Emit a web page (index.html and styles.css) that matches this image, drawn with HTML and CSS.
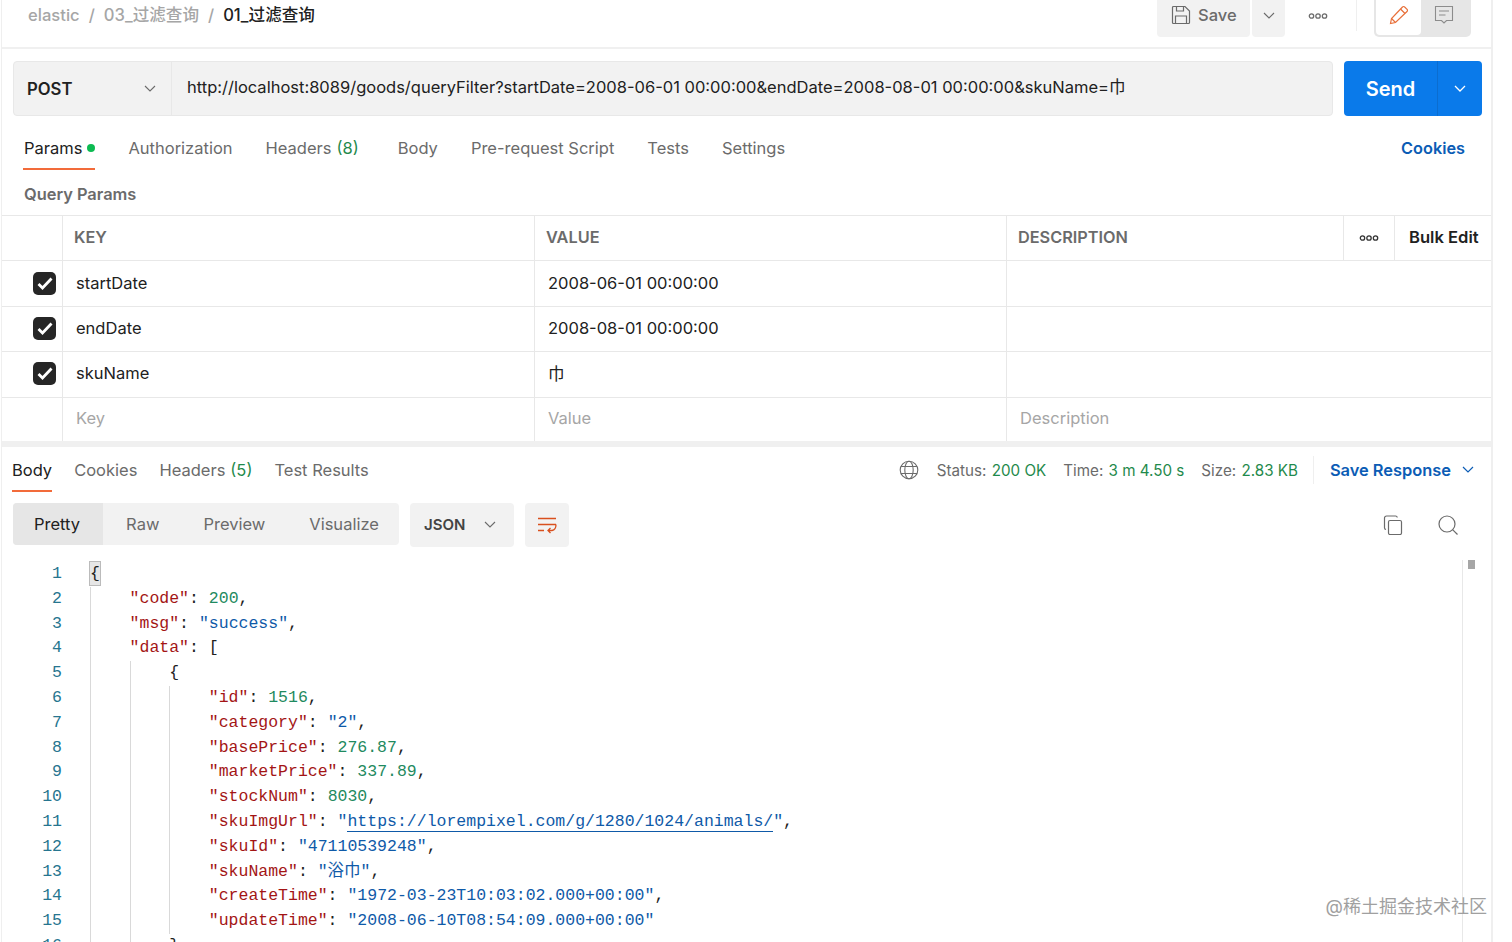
FILE: index.html
```html
<html>

<head>
	<meta charset="utf-8">
	<title>01_过滤查询</title>
	<link rel="stylesheet" href="styles.css">
</head>

<body>
	<div id="app">
		<div class="topBar">
			<div class="crumbs">
				<span class="crumb">elastic</span><span class="crumbSep">/</span>
				<span class="crumb">03_过滤查询</span><span class="crumbSep">/</span>
				<span class="crumbNow">01_过滤查询</span>
			</div>
			<div class="topActions">
				<div class="saveBtn">
					<svg class="icon20" viewBox="0 0 20 20" fill="none" stroke="#6b6b6b" stroke-width="1.2"><path d="M1.5 2.5a1 1 0 0 1 1-1h11.5l4.500 4.500v11.500a1 1 0 0 1-1 1h-15a1 1 0 0 1-1-1z"/><path d="M5.500 1.500v4.500h7v-4.500M4.500 18.500v-7.500h11v7.500"/></svg>
					<span>Save</span>
				</div>
				<div class="saveArrow">
					<svg class="chev" viewBox="0 0 12 7" fill="none" stroke="#6b6b6b" stroke-width="1.100"><path d="M1 1l5 5 5-5"/></svg>
				</div>
				<div class="dots">
					<svg class="dotsIcon" viewBox="0 0 20 6" fill="none" stroke="#6b6b6b" stroke-width="1.300"><circle cx="3.500" cy="3" r="2.200"/><circle cx="10" cy="3" r="2.200"/><circle cx="16.500" cy="3" r="2.200"/></svg>
				</div>
				<div class="toggleGroup">
					<div class="toggleOn">
						<svg class="icon20" viewBox="0 0 20 20" fill="none" stroke="#e8703a" stroke-width="1.200"><path d="M1.500 18.500l1-5L13.500 2a1.500 1.500 0 0 1 2.200 0l2.300 2.300a1.500 1.500 0 0 1 0 2.200L6.500 17.500z"/><path d="M11.500 4l4.500 4.500M2.500 13.500l4 4"/></svg>
					</div>
					<div class="toggleOff">
						<svg class="icon20" viewBox="0 0 20 20" fill="none" stroke="#8c8c8c" stroke-width="1.100"><path d="M1.500 1.500h17v14h-6l-2.500 2.500-2.500-2.500h-6z"/><path d="M5 6h10M5 10h6.500"/></svg>
					</div>
				</div>
			</div>
		</div>

		<div class="urlRow">
			<div class="urlBox">
				<div class="method">
					<span>POST</span>
					<svg class="chev" viewBox="0 0 12 7" fill="none" stroke="#6b6b6b" stroke-width="1.100"><path d="M1 1l5 5 5-5"/></svg>
				</div>
				<div class="urlText">http://localhost:8089/goods/queryFilter?startDate=2008-06-01 00:00:00&amp;endDate=2008-08-01 00:00:00&amp;skuName=巾</div>
			</div>
			<div class="sendBtn">
				<span class="sendLabel">Send</span>
				<span class="sendArrow">
					<svg class="chev" viewBox="0 0 12 7" fill="none" stroke="#fff" stroke-width="1.300"><path d="M1 1l5 5 5-5"/></svg>
				</span>
			</div>
		</div>

		<div class="reqTabs">
			<div class="tab active">Params<span class="greenDot"></span></div>
			<div class="tab">Authorization</div>
			<div class="tab">Headers <span class="count">(8)</span></div>
			<div class="tab">Body</div>
			<div class="tab">Pre-request Script</div>
			<div class="tab">Tests</div>
			<div class="tab">Settings</div>
			<div class="cookiesLink">Cookies</div>
		</div>

		<div class="paramsTitle">Query Params</div>

		<div class="paramsTable">
			<div class="row headRow">
				<div class="cell"></div>
				<div class="cell">KEY</div>
				<div class="cell">VALUE</div>
				<div class="cell descHead">
					<span class="descLabel">DESCRIPTION</span>
					<span class="headDots">
						<svg class="dotsIcon" viewBox="0 0 20 6" fill="none" stroke="#333" stroke-width="1.300"><circle cx="3.500" cy="3" r="2.200"/><circle cx="10" cy="3" r="2.200"/><circle cx="16.500" cy="3" r="2.200"/></svg>
					</span>
					<span class="bulkEdit">Bulk Edit</span>
				</div>
			</div>
			<div class="row">
				<div class="cell checkCell"><span class="check"><svg viewBox="0 0 16 13" fill="none" stroke="#fff" stroke-width="2.800"><path d="M1.500 7l4 4 9-9.500"/></svg></span></div>
				<div class="cell">startDate</div>
				<div class="cell">2008-06-01 00:00:00</div>
				<div class="cell"></div>
			</div>
			<div class="row">
				<div class="cell checkCell"><span class="check"><svg viewBox="0 0 16 13" fill="none" stroke="#fff" stroke-width="2.800"><path d="M1.500 7l4 4 9-9.500"/></svg></span></div>
				<div class="cell">endDate</div>
				<div class="cell">2008-08-01 00:00:00</div>
				<div class="cell"></div>
			</div>
			<div class="row">
				<div class="cell checkCell"><span class="check"><svg viewBox="0 0 16 13" fill="none" stroke="#fff" stroke-width="2.800"><path d="M1.500 7l4 4 9-9.500"/></svg></span></div>
				<div class="cell">skuName</div>
				<div class="cell">巾</div>
				<div class="cell"></div>
			</div>
			<div class="row placeholderRow">
				<div class="cell"></div>
				<div class="cell">Key</div>
				<div class="cell">Value</div>
				<div class="cell">Description</div>
			</div>
		</div>

		<div class="resTabs">
			<div class="tab active">Body</div>
			<div class="tab">Cookies</div>
			<div class="tab">Headers <span class="count">(5)</span></div>
			<div class="tab">Test Results</div>
			<div class="resStatus">
				<svg class="globe" viewBox="0 0 20 20" fill="none" stroke="#6b6b6b" stroke-width="1.100"><circle cx="10" cy="10" r="8.800"/><ellipse cx="10" cy="10" rx="4.200" ry="8.800"/><path d="M2 6.500h16M2 13.500h16"/></svg>
				<span class="stat">Status: <b>200 OK</b></span>
				<span class="stat">Time: <b>3 m 4.50 s</b></span>
				<span class="stat">Size: <b>2.83 KB</b></span>
				<span class="saveResponse">
					Save Response
					<svg class="chev" viewBox="0 0 12 7" fill="none" stroke="#0b5cb5" stroke-width="1.200"><path d="M1 1l5 5 5-5"/></svg>
				</span>
			</div>
		</div>

		<div class="resTools">
			<div class="viewGroup">
				<span class="viewItem on">Pretty</span>
				<span class="viewItem">Raw</span>
				<span class="viewItem">Preview</span>
				<span class="viewItem">Visualize</span>
			</div>
			<div class="langBtn">
				<span>JSON</span>
				<svg class="chev" viewBox="0 0 12 7" fill="none" stroke="#6b6b6b" stroke-width="1.100"><path d="M1 1l5 5 5-5"/></svg>
			</div>
			<div class="wrapBtn">
				<svg class="icon20" viewBox="0 0 20 20" fill="none" stroke="#d9501e" stroke-width="1.300"><path d="M1 3.500h18M1 9.500h18M1 15.500h6M19 9.500v0c0 3-1 5.500-4 6h-4M13.500 13l-2.500 2.500 2.500 2.500"/></svg>
			</div>
			<div class="toolsRight">
				<svg class="icon20" viewBox="0 0 20 20" fill="none" stroke="#6b6b6b" stroke-width="1.200"><rect x="5.500" y="5.500" width="13" height="14" rx="1.500"/><path d="M3 14.500a1.800 1.800 0 0 1-1.500-1.800V3a2 2 0 0 1 2-2h9a1.800 1.800 0 0 1 1.800 1.500"/></svg>
				<svg class="icon20 searchIcon" viewBox="0 0 20 20" fill="none" stroke="#6b6b6b" stroke-width="1.200"><circle cx="9" cy="9" r="8"/><path d="M14.800 14.800l4.700 4.700"/></svg>
			</div>
		</div>

		<div class="codeArea">
			<div class="lineNums">
				<div>1</div><div>2</div><div>3</div><div>4</div><div>5</div><div>6</div><div>7</div><div>8</div>
				<div>9</div><div>10</div><div>11</div><div>12</div><div>13</div><div>14</div><div>15</div><div>16</div>
			</div>
			<div class="code">
				<div class="ln"><span class="brace">{</span></div>
				<div class="block">
					<div class="ln"><i>"code"</i>: <u>200</u>,</div>
					<div class="ln"><i>"msg"</i>: <s>"success"</s>,</div>
					<div class="ln"><i>"data"</i>: [</div>
					<div class="block">
						<div class="ln">{</div>
						<div class="block">
							<div class="ln"><i>"id"</i>: <u>1516</u>,</div>
							<div class="ln"><i>"category"</i>: <s>"2"</s>,</div>
							<div class="ln"><i>"basePrice"</i>: <u>276.87</u>,</div>
							<div class="ln"><i>"marketPrice"</i>: <u>337.89</u>,</div>
							<div class="ln"><i>"stockNum"</i>: <u>8030</u>,</div>
							<div class="ln"><i>"skuImgUrl"</i>: <s>"<a>https://lorempixel.com/g/1280/1024/animals/</a>"</s>,</div>
							<div class="ln"><i>"skuId"</i>: <s>"47110539248"</s>,</div>
							<div class="ln"><i>"skuName"</i>: <s>"浴巾"</s>,</div>
							<div class="ln"><i>"createTime"</i>: <s>"1972-03-23T10:03:02.000+00:00"</s>,</div>
							<div class="ln"><i>"updateTime"</i>: <s>"2008-06-10T08:54:09.000+00:00"</s></div>
						</div>
						<div class="ln">}</div>
					</div>
				</div>
			</div>
			<div class="scrollTrack"><span class="scrollThumb"></span></div>
		</div>

		<div class="watermark">@稀土掘金技术社区</div>
	</div>
</body>

</html>
```

FILE: styles.css
```css
html,
body {
	margin: 0;
	height: 942px;
	overflow: hidden;
	background: #fff;
}

body {
	font-family: Inter, "Noto Sans CJK SC", sans-serif;
	font-size: 16.500px;
	color: #212121;
}

#app {
	position: relative;
	width: 1489px;
	height: 942px;
	margin-left: 1px;
	border-left: 1px solid #efefef;
	border-right: 2px solid #efefef;
	overflow: hidden;
}

svg {
	display: block;
	flex: none;
}

.icon20 {
	width: 20px;
	height: 20px;
}

.chev {
	width: 12px;
	height: 7px;
}

.dotsIcon {
	width: 20px;
	height: 6px;
}

/* top bar */
.topBar {
	display: flex;
	justify-content: space-between;
	height: 47px;
	border-bottom: 2px solid #f0f0f0;
}

.crumbs {
	display: flex;
	gap: 9px;
	padding: 3px 0 0 26px;
	height: 24px;
	line-height: 24px;
	font-size: 16.600px;
	font-weight: 500;
}

.crumb,
.crumbSep {
	color: #a6a6a6;
}

.crumbNow {
	color: #212121;
}

.topActions {
	display: flex;
	align-items: flex-start;
	padding-right: 20px;
}

.saveBtn {
	display: flex;
	align-items: center;
	gap: 7px;
	box-sizing: border-box;
	width: 93px;
	height: 37px;
	padding: 0 0 7px 14px;
	background: #f2f2f2;
	border-radius: 0 0 4px 4px;
	color: #6b6b6b;
	font-weight: 500;
}

.saveArrow {
	display: flex;
	align-items: center;
	justify-content: center;
	box-sizing: border-box;
	width: 33px;
	height: 37px;
	margin-left: 2px;
	padding-bottom: 7px;
	background: #f2f2f2;
	border-radius: 0 0 4px 4px;
}

.dots {
	display: flex;
	align-items: center;
	justify-content: center;
	box-sizing: border-box;
	width: 72px;
	height: 31px;
	margin-right: 17px;
	padding-right: 6px;
	border-right: 1px solid #efefef;
}

.toggleGroup {
	display: flex;
	height: 35px;
	padding: 0 2px 2px;
	background: #e6e6e6;
	border-radius: 0 0 5px 5px;
}

.toggleOn,
.toggleOff {
	display: flex;
	align-items: center;
	justify-content: center;
	width: 45px;
	padding-bottom: 6px;
	box-sizing: border-box;
}

.toggleOn {
	background: #fff;
	border-radius: 0 0 4px 4px;
}

.toggleOff {
	width: 48px;
	padding-right: 3px;
}

/* url row */
.urlRow {
	display: flex;
	gap: 11px;
	padding: 12px 9px 0 11px;
}

.urlBox {
	display: flex;
	flex: 1;
	height: 53px;
	background: #f2f2f2;
	border: 1px solid #e8e8e8;
	border-radius: 4px;
}

.method {
	display: flex;
	align-items: center;
	justify-content: space-between;
	width: 129px;
	padding: 0 15px 0 13px;
	border-right: 1px solid #e8e8e8;
	font-size: 16.700px;
	font-weight: 600;
	flex: none;
}

.urlText {
	padding-left: 15px;
	line-height: 51px;
	white-space: nowrap;
}

.sendBtn {
	display: flex;
	align-items: center;
	width: 138px;
	height: 55px;
	background: #0a7aea;
	border-radius: 4px;
	color: #fff;
	font-size: 20px;
	font-weight: 600;
}

.sendLabel {
	width: 93px;
	text-align: center;
}

.sendArrow {
	display: flex;
	align-items: center;
	justify-content: center;
	width: 44px;
	height: 55px;
	border-left: 1px solid #0b6dd0;
}

/* tabs */
.reqTabs,
.resTabs {
	display: flex;
	align-items: flex-start;
}

.reqTabs {
	gap: 33px;
	height: 55px;
	padding: 20px 0 0 22px;
	box-sizing: border-box;
}

.tab {
	display: flex;
	gap: 5px;
	height: 32px;
	line-height: 24px;
	color: #6b6b6b;
	white-space: nowrap;
}

.tab.active {
	color: #212121;
	border-bottom: 2px solid #f26b3a;
}

.reqTabs .active {
	margin-left: -1px;
	padding-left: 1px;
}

.reqTabs .count {
	margin-right: 6px;
}

.greenDot {
	width: 8px;
	height: 8px;
	margin-top: 8px;
	background: #0cbb52;
	border-radius: 50%;
}

.count {
	color: #1f8a4c;
}

.cookiesLink {
	margin-left: auto;
	padding-right: 26px;
	line-height: 24px;
	font-size: 16.300px;
	color: #0b5cb5;
	font-weight: 600;
}

.paramsTitle {
	height: 44px;
	padding: 11px 0 0 22px;
	box-sizing: border-box;
	line-height: 24px;
	font-size: 16.400px;
	color: #6b6b6b;
	font-weight: 600;
}

/* params table */
.paramsTable {
	border-top: 1px solid #e8e8e8;
	border-bottom: 6px solid #f0f0f0;
}

.row {
	display: grid;
	grid-template-columns: 61px 472px 472px 1fr;
	height: 45.400px;
	box-sizing: border-box;
	border-bottom: 1px solid #e8e8e8;
}

.row:last-child {
	border-bottom: none;
	height: 43.400px;
}

.cell {
	display: flex;
	align-items: center;
	box-sizing: border-box;
	padding: 0 0 2px 13px;
	border-right: 1px solid #e8e8e8;
	white-space: nowrap;
}

.cell:last-child {
	border-right: none;
}

.headRow .cell {
	padding-left: 11px;
	font-size: 16.300px;
	color: #6b6b6b;
	font-weight: 600;
}

.headRow .descHead {
	padding: 0 0 0 11px;
}

.descLabel {
	width: 325px;
	margin-bottom: 2px;
}

.headDots {
	display: flex;
	align-items: center;
	justify-content: center;
	width: 50px;
	height: 100%;
	border-left: 1px solid #e8e8e8;
	border-right: 1px solid #e8e8e8;
}

.bulkEdit {
	margin-bottom: 2px;
	padding-left: 14px;
	font-size: 16.600px;
	color: #212121;
}

.checkCell {
	justify-content: flex-end;
	padding: 0 6px 1px 0;
}

.check {
	display: flex;
	align-items: center;
	justify-content: center;
	width: 23px;
	height: 23px;
	background: #262626;
	border-radius: 5px;
}

.check svg {
	width: 16px;
	height: 13px;
}

.placeholderRow .cell {
	color: #a6a6a6;
}

/* response */
.resTabs {
	gap: 22px;
	height: 56px;
	padding: 11px 0 0 10px;
	box-sizing: border-box;
}

.resStatus {
	display: flex;
	align-items: center;
	height: 24px;
	margin-left: auto;
	padding-right: 17px;
	font-size: 15.200px;
	color: #6b6b6b;
}

.globe {
	width: 20px;
	height: 20px;
	margin-right: 18px;
}

.stat {
	margin-right: 17px;
	padding-top: 2px;
	white-space: pre;
}

.stat:nth-of-type(3) {
	margin-right: 16px;
}

.stat b {
	margin-left: 1px;
	color: #1f8a4c;
	font-weight: 400;
}

.saveResponse {
	display: flex;
	align-items: center;
	gap: 11px;
	margin-left: -1px;
	padding-left: 16px;
	border-left: 1px solid #efefef;
	color: #0b5cb5;
	font-size: 16.400px;
	font-weight: 600;
	line-height: 28px;
}

.resTools {
	display: flex;
	align-items: flex-start;
	gap: 11px;
	height: 57px;
	padding-left: 11px;
}

.viewGroup {
	display: flex;
	align-items: center;
	height: 42px;
	width: 386px;
	background: #f2f2f2;
	border-radius: 4px;
	color: #6b6b6b;
}

.viewItem {
	padding: 0 22px;
	line-height: 42px;
}

.viewItem.on {
	margin-right: 1px;
	padding: 0 23px 0 21px;
	background: #e6e6e6;
	border-radius: 4px 0 0 4px;
	color: #212121;
}

.langBtn {
	display: flex;
	align-items: center;
	justify-content: space-between;
	width: 72px;
	height: 44px;
	padding: 0 18px 0 14px;
	background: #f2f2f2;
	border-radius: 4px;
	color: #444;
	font-size: 15px;
	font-weight: 600;
}

.wrapBtn {
	display: flex;
	align-items: center;
	justify-content: center;
	width: 44px;
	height: 44px;
	background: #f2f2f2;
	border-radius: 4px;
}

.toolsRight {
	display: flex;
	gap: 35px;
	margin-left: auto;
	padding: 12px 33px 0 0;
}

/* code */
.codeArea {
	display: flex;
	font-family: "Liberation Mono", "Noto Sans CJK SC", monospace;
	font-size: 16.500px;
	line-height: 24.800px;
}

.lineNums {
	width: 60px;
	margin-right: 28px;
	padding-top: 2px;
	text-align: right;
	color: #26758f;
}

.code {
	flex: 1;
	padding-top: 2px;
	color: #212121;
}

.ln {
	height: 24.800px;
	white-space: pre;
}

.brace {
	display: inline-block;
	height: 23px;
	line-height: 23px;
	background: #e6e6e6;
	outline: 1px solid #bbb;
}

.block {
	padding-left: 38.600px;
	border-left: 1px solid #d9d9d9;
}

.code i {
	font-style: normal;
	color: #a31515;
}

.code s {
	text-decoration: none;
	color: #0f5aa8;
}

.code u {
	text-decoration: none;
	color: #1f8a60;
}

.code a {
	color: #0f5aa8;
	border-bottom: 1px solid #0f5aa8;
}

.scrollTrack {
	width: 26px;
	margin: 0 2px 0 0;
	height: 390px;
	border-left: 1px solid #e8e8e8;
}

.scrollThumb {
	display: block;
	width: 7px;
	height: 9px;
	margin-left: 5px;
	background: #a6a6a6;
}

.watermark {
	position: absolute;
	right: 4px;
	bottom: 22px;
	font-size: 18px;
	line-height: 26px;
	color: #a0a0a0;
}
```
